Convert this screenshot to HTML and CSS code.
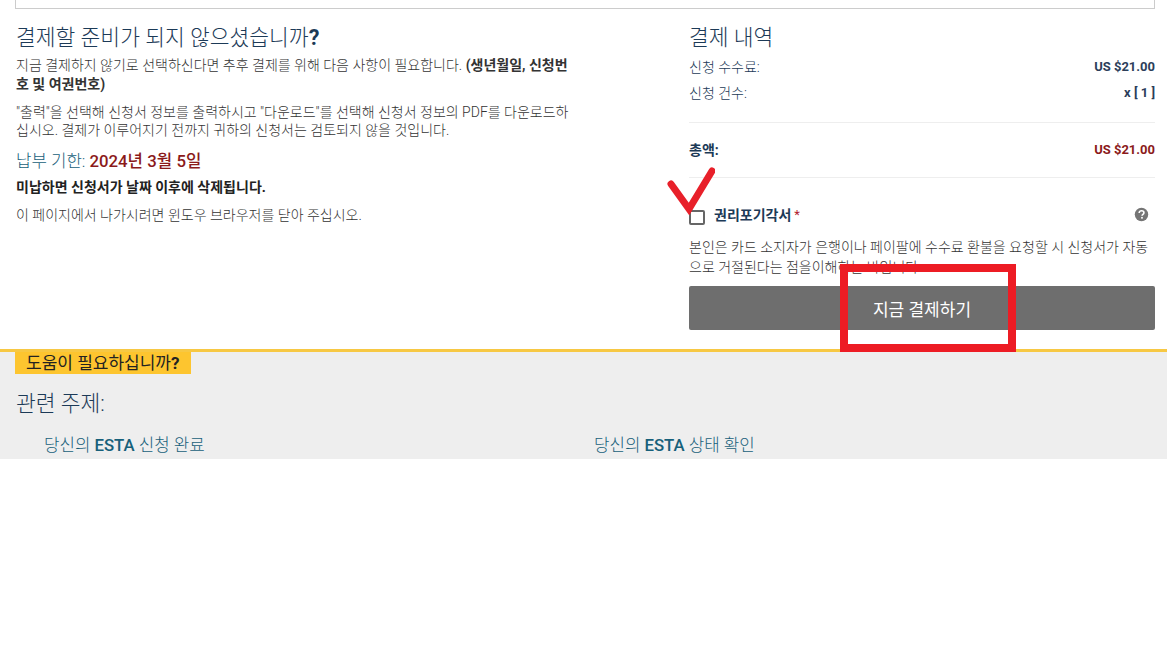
FILE: index.html
```html
<!DOCTYPE html>
<html lang="ko">

<head>
  <title>ESTA 결제</title>
  <link rel="stylesheet" href="styles.css">
</head>

<body>
  <div class="topbox"></div>

  <div class="columns">
    <div class="later">
      <h2 class="later-title">결제할 준비가 되지 않으셨습니까<b>?</b></h2>
      <p class="text first">지금 결제하지 않기로 선택하신다면 추후 결제를 위해 다음 사항이 필요합니다. <b>(생년월일, 신청번호 및 여권번호)</b></p>
      <p class="text">"출력"을 선택해 신청서 정보를 출력하시고 "다운로드"를 선택해 신청서 정보의 PDF를 다운로드하십시오. 결제가 이루어지기 전까지 귀하의 신청서는 검토되지 않을 것입니다.</p>
      <h3 class="due">납부 기한: <b>2024년 3월 5일</b></h3>
      <p class="text warn"><b>미납하면 신청서가 날짜 이후에 삭제됩니다.</b></p>
      <p class="text">이 페이지에서 나가시려면 윈도우 브라우저를 닫아 주십시오.</p>
    </div>

    <div class="summary">
      <h2 class="summary-title">결제 내역</h2>
      <div class="row"><span>신청 수수료:</span><b class="amount">US $21.00</b></div>
      <div class="row"><span>신청 건수:</span><b class="amount">x [ 1 ]</b></div>
      <div class="row total"><b>총액:</b><b class="amount price">US $21.00</b></div>
      <div class="waiver">
        <span class="checkbox"></span>
        <b class="waiver-label">권리포기각서</b><span class="star">*</span>
        <svg class="help-icon" viewBox="0 0 16 16" width="15" height="15">
          <circle cx="8" cy="8" r="7.2" fill="#757575" />
          <path d="M5.5 6.3c0-1.5 1.1-2.3 2.6-2.3 1.4 0 2.5.8 2.5 2.1 0 1.9-2 1.8-2 3.3" fill="none" stroke="#fff" stroke-width="1.7" />
          <rect x="7.6" y="10.6" width="1.8" height="1.8" fill="#fff" />
        </svg>
      </div>
      <p class="text waiver-text">본인은 카드 소지자가 은행이나 페이팔에 수수료 환불을 요청할 시 신청서가 자동으로 거절된다는 점을이해하는 바입니다.</p>
      <button class="pay">지금 결제하기</button>
    </div>
  </div>

  <div class="help">
    <div class="help-tab">도움이 필요하십니까<b>?</b></div>
    <h2 class="help-title">관련 주제:</h2>
    <div class="links">
      <a>당신의 <b>ESTA</b> 신청 완료</a>
      <a>당신의 <b>ESTA</b> 상태 확인</a>
    </div>
  </div>

  <!-- red marks drawn over the screenshot -->
  <svg class="mark-check" viewBox="0 0 50 50" width="50" height="50">
    <path d="M6 19 L24 44 L47 6" fill="none" stroke="#e8202a" stroke-width="7" stroke-linecap="round" stroke-linejoin="miter" />
  </svg>
  <div class="mark-box"></div>
</body>

</html>
```

FILE: styles.css
```css
body {
  margin: 0;
  position: relative;
  background: #fff;
  color: #222;
  font-family: Roboto, "Noto Sans CJK KR", sans-serif;
  font-size: 14px;
  font-weight: 300;
}

b {
  font-weight: 700;
}

.topbox {
  height: 8px;
  margin: 0 12px 0 15px;
  border: 1px solid #ccc;
  border-top: none;
}

.columns {
  display: flex;
  justify-content: space-between;
  height: 340px;
  padding: 0 12px 0 16px;
}

.later {
  width: 558px;
}

.later-title,
.summary-title {
  margin: 15px 0 0;
  font-size: 21.5px;
  line-height: 28px;
  font-weight: 300;
  color: #1c3a57;
}

.text {
  margin: 10px 0 0;
  line-height: 18px;
  color: #333;
}

.text.first {
  margin-top: 4px;
  margin-bottom: 9px;
  line-height: 19px;
}

.first + .text {
  margin-top: 9px;
}

.due {
  margin: 11px 0 0;
  font-size: 16.8px;
  line-height: 22px;
  font-weight: 300;
  color: #17607a;
}

.due b {
  color: #8b1a1a;
  font-weight: 500;
}

.text.warn {
  margin-top: 6px;
  color: #222;
}

.summary {
  width: 466px;
}

.row {
  display: flex;
  justify-content: space-between;
  margin-top: 8px;
  line-height: 18px;
  color: #1c3a57;
}

.summary-title + .row {
  margin-top: 6px;
}

.amount {
  font-size: 13px;
  color: #2c3e5a;
}

.row.total {
  margin-top: 20px;
  padding: 18px 0;
  border-top: 1px solid #eee;
  border-bottom: 1px solid #eee;
}

.row.total .price {
  color: #8b1a1a;
}

.waiver {
  display: flex;
  align-items: center;
  margin-top: 27px;
  height: 18px;
}

.checkbox {
  box-sizing: border-box;
  width: 16px;
  height: 15px;
  margin: 6px 9px 0 0;
  border: 2px solid #666;
  border-radius: 2px;
}

.waiver-label {
  font-size: 14px;
  color: #1c3a57;
}

.star {
  margin-left: 3px;
  font-size: 13px;
  color: #b01c2e;
  font-weight: 400;
}

.help-icon {
  margin-left: auto;
  margin-right: 6px;
}

.waiver-text {
  margin-top: 14px;
  line-height: 20px;
}

.pay {
  display: block;
  width: 100%;
  height: 44px;
  margin-top: 9px;
  border: none;
  border-radius: 2px;
  background: #6e6e6e;
  color: #fff;
  font-family: inherit;
  font-size: 17px;
  font-weight: 400;
}

.help {
  height: 107px;
  border-top: 3px solid #f7c843;
  background: #eee;
  padding: 0 12px 0 15px;
}

.help-tab {
  display: inline-block;
  padding: 0 12px 0 11px;
  height: 22px;
  line-height: 22px;
  background: #fdc52f;
  color: #222;
  font-size: 17px;
  font-weight: 400;
}

.help-title {
  margin: 16px 0 0 1px;
  font-size: 21.5px;
  line-height: 28px;
  font-weight: 300;
  color: #1c3a57;
}

.links {
  display: flex;
  margin: 16px 0 0 29px;
}

.links a {
  width: 550px;
  font-size: 16.8px;
  line-height: 22px;
  color: #17607a;
}

.links b {
  font-weight: 500;
}

.mark-check {
  position: absolute;
  left: 665px;
  top: 165px;
}

.mark-box {
  position: absolute;
  left: 840px;
  top: 264px;
  width: 160px;
  height: 72px;
  border: 8px solid #ed1c24;
}
```
